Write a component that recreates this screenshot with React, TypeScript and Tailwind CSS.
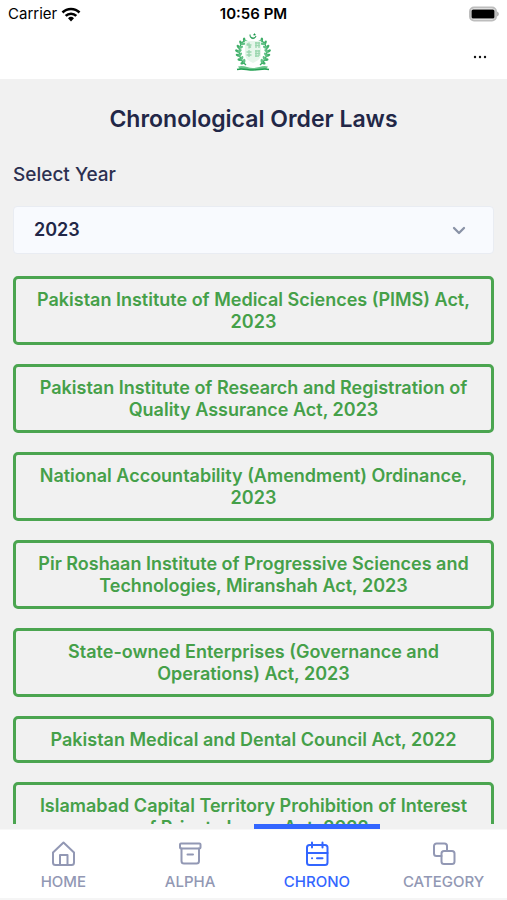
import { useState } from "react";
import type { ReactNode } from "react";

const LAWS = [
  "Pakistan Institute of Medical Sciences (PIMS) Act, 2023",
  "Pakistan Institute of Research and Registration of Quality Assurance Act, 2023",
  "National Accountability (Amendment) Ordinance, 2023",
  "Pir Roshaan Institute of Progressive Sciences and Technologies, Miranshah Act, 2023",
  "State-owned Enterprises (Governance and Operations) Act, 2023",
  "Pakistan Medical and Dental Council Act, 2022",
  "Islamabad Capital Territory Prohibition of Interest of Private Loans Act, 2022",
];

const YEARS = ["2023", "2022", "2021", "2020"];

const LEAVES = [
  { x: 10, y: 8, r: -50 }, { x: 7, y: 11, r: -30 }, { x: 5, y: 15, r: -15 },
  { x: 4, y: 19, r: 0 }, { x: 5, y: 23, r: 15 }, { x: 7, y: 27, r: 30 }, { x: 10, y: 30, r: 50 },
];

function Branch() {
  return (
    <g>
      <path d="M11 7C3 13 3 25 12 32" fill="none" stroke="#35aa61" strokeWidth="1.3" />
      {LEAVES.map(l => (
        <g key={l.y} transform={`translate(${l.x} ${l.y}) rotate(${-l.r})`}>
          <ellipse cx="-1.3" cy="-.3" rx="2.3" ry="1.3" transform="rotate(35)" fill="#3fae68" />
          <ellipse cx="2" cy="0" rx="2.3" ry="1.3" transform="rotate(-35)" fill="#62c186" />
        </g>
      ))}
    </g>
  );
}

function Emblem() {
  return (
    <svg viewBox="0 0 38 38" className="h-[38px] w-[38px]" role="img" aria-label="State emblem">
      <Branch />
      <g transform="matrix(-1 0 0 1 38 0)"><Branch /></g>
      <path d="M16 1.500c0 3.500 4.500 4.500 6 1.500-.5 4-7 3.500-6-1.500Z" fill="#159447" stroke="#159447" strokeWidth=".5" />
      <path d="m20.500 0 .5 1 1 .1-.8.7.2 1-.9-.5-.9.5.2-1-.8-.7 1-.1Z" fill="#159447" />
      <path d="M11 8h16v13c0 5-4 7-8 9-4-2-8-4-8-9Z" fill="#e6f6eb" />
      <g fill="none" stroke="#9bd6af" strokeWidth="1.300">
        <path d="M12.500 12h5M15 9.500v6M13 10.500l4 4M21 10h5M21 12.500h5M22 9v6M25 9v6" />
        <path d="M12.500 19h5M12.500 22h5M15 17v7M21 18h5M21 20.500h5M21 23h4M22 17v7M25 17v6" />
      </g>
      <path d="M4 33.500c5-2 10 1.500 15 1.500s10-3.500 15-1.500l-2 3c-5-1-9 .5-13 .5s-8-1.500-13-.5Z" fill="#6cc68c" />
      <path d="M3 36.500c5-1.500 10 .5 16 .5s11-2 16-.5" fill="none" stroke="#22a052" strokeWidth="1.400" />
    </svg>
  );
}

function StatusBar() {
  return (
    <div className="grid h-7 grid-cols-3 items-center px-2 text-[15px] leading-5 text-black">
      <div className="flex items-center gap-1">
        <span>Carrier</span>
        <svg viewBox="0 0 20 15" className="h-[15px] w-5" aria-hidden="true">
          <g fill="none" stroke="#000" strokeWidth="2.600">
            <path d="M1.500 5.500a12 12 0 0 1 17 0" />
            <path d="M4.700 8.900a7.500 7.500 0 0 1 10.600 0" />
          </g>
          <path d="m10 14.500-3-3.200a4.300 4.300 0 0 1 6 0Z" fill="#000" />
        </svg>
      </div>
      <time className="text-center font-semibold">10:56 PM</time>
      <svg viewBox="0 0 30 16" className="h-4 w-[30px] justify-self-end" aria-hidden="true">
        <rect x="1" y="1.500" width="26" height="13" rx="4" fill="#fff" stroke="#bdbdbd" strokeWidth="2" />
        <rect x="2.500" y="3.500" width="23" height="9" rx="1.500" fill="#000" />
        <path d="M28 5.500c2.500 1 2.500 4 0 5Z" fill="#b4b4b4" />
      </svg>
    </div>
  );
}

function Icon({ children }: { children: ReactNode }) {
  return (
    <svg viewBox="0 0 26 26" className="h-[26px] w-[26px]" fill="none" stroke="currentColor"
      strokeWidth="2" strokeLinecap="round" strokeLinejoin="round" aria-hidden="true">
      {children}
    </svg>
  );
}

const TABS = [
  { label: "HOME", icon: (
    <Icon>
      <path d="M3 11.500 13.500 1.500l10.500 10v10a2.500 2.500 0 0 1-2.500 2.500h-16A2.500 2.500 0 0 1 3 21.500Z" />
      <path d="M10 24V14h7.500v10" />
    </Icon>
  ) },
  { label: "ALPHA", icon: (
    <Icon>
      <rect x="3" y="2.500" width="20.500" height="5" rx="1" />
      <path d="M4.500 7.500v12.500A2.500 2.500 0 0 0 7 22.500h12.500a2.500 2.500 0 0 0 2.500-2.500V7.500M10.500 13.500h5.500" />
    </Icon>
  ) },
  { label: "CHRONO", icon: (
    <Icon>
      <rect x="3" y="4" width="20.500" height="20" rx="2.500" />
      <path d="M8 1.500v5M18.500 1.500v5M3 12h20.500M8 17.300h.1M13 17.300h5.500" />
    </Icon>
  ) },
  { label: "CATEGORY", icon: (
    <Icon>
      <path d="M10.500 15H5.500A2.500 2.500 0 0 1 3 12.500v-7.500A2.500 2.500 0 0 1 5.500 2.500h8A2.500 2.500 0 0 1 16 5V9.500" />
      <rect x="10.500" y="10" width="13" height="13" rx="2.500" />
    </Icon>
  ) },
];

export default function App() {
  const [year, setYear] = useState("2023");
  const [tab, setTab] = useState("CHRONO");

  return (
    <div className="flex h-screen flex-col bg-[#f1f1f1] font-['Inter','Liberation_Sans',sans-serif]">
      <header className="shrink-0 bg-white pb-2">
        <StatusBar />
        <div className="grid grid-cols-3 items-end px-5 pt-[5px]">
          <span />
          <div className="flex justify-center"><Emblem /></div>
          <button type="button" aria-label="More options" className="flex h-7 w-3.5 items-center justify-center justify-self-end">
            <svg viewBox="0 0 14 4" className="h-1 w-3.5" fill="#111" aria-hidden="true">
              <circle cx="2" cy="2" r="1.200" /><circle cx="7" cy="2" r="1.200" /><circle cx="12" cy="2" r="1.200" />
            </svg>
          </button>
        </div>
      </header>

      <main className="min-h-0 flex-1 overflow-hidden px-[13px] pt-6">
        <h1 className="text-center text-[23px] leading-8 font-semibold text-[#222747]">Chronological Order Laws</h1>
        <label htmlFor="year" className="mt-6 block text-[19px] leading-8 font-medium text-[#2c3050]">Select Year</label>
        <div className="relative mt-[15px]">
          <select id="year" value={year} onChange={e => setYear(e.target.value)}
            className="block h-12 w-full appearance-none rounded-sm border border-[#e9ecf2] bg-[#f8fafe] px-5 text-lg font-semibold text-[#222747]">
            {YEARS.map(y => <option key={y}>{y}</option>)}
          </select>
          <svg viewBox="0 0 14 10" className="pointer-events-none absolute top-5 right-7 h-2.5 w-3.5" fill="none"
            stroke="#8992a6" strokeWidth="2.300" strokeLinecap="round" strokeLinejoin="round" aria-hidden="true">
            <path d="m2 2 5 5 5-5" />
          </svg>
        </div>
        <ul className="mt-[22px] flex flex-col gap-[19px]">
          {LAWS.map(law => (
            <li key={law}>
              <button type="button" className="block w-full rounded-[5px] border-3 border-[#4ba550] px-4 pt-2.5 pb-[9px] text-center text-lg leading-[22px] font-semibold text-[#45a049]">
                {law}
              </button>
            </li>
          ))}
        </ul>
      </main>

      <nav className="shrink-0 border-b-2 border-[#f5f5f5]">
        <ul className="grid grid-cols-4 bg-linear-to-b from-[#f1f1f1] from-[5px] to-white to-[6px]">
          {TABS.map(t => (
            <li key={t.label}>
              <button type="button" onClick={() => setTab(t.label)} aria-current={tab === t.label ? "page" : undefined}
                className={`flex h-[74px] w-full flex-col items-center border-t-5 pt-3 text-[15px] leading-5 font-medium ${
                  tab === t.label ? "border-[#3366ff] text-[#3366ff]" : "border-transparent text-[#9298b4]"
                }`}>
                {t.icon}
                <span className="mt-[5px]">{t.label}</span>
              </button>
            </li>
          ))}
        </ul>
      </nav>
    </div>
  );
}
